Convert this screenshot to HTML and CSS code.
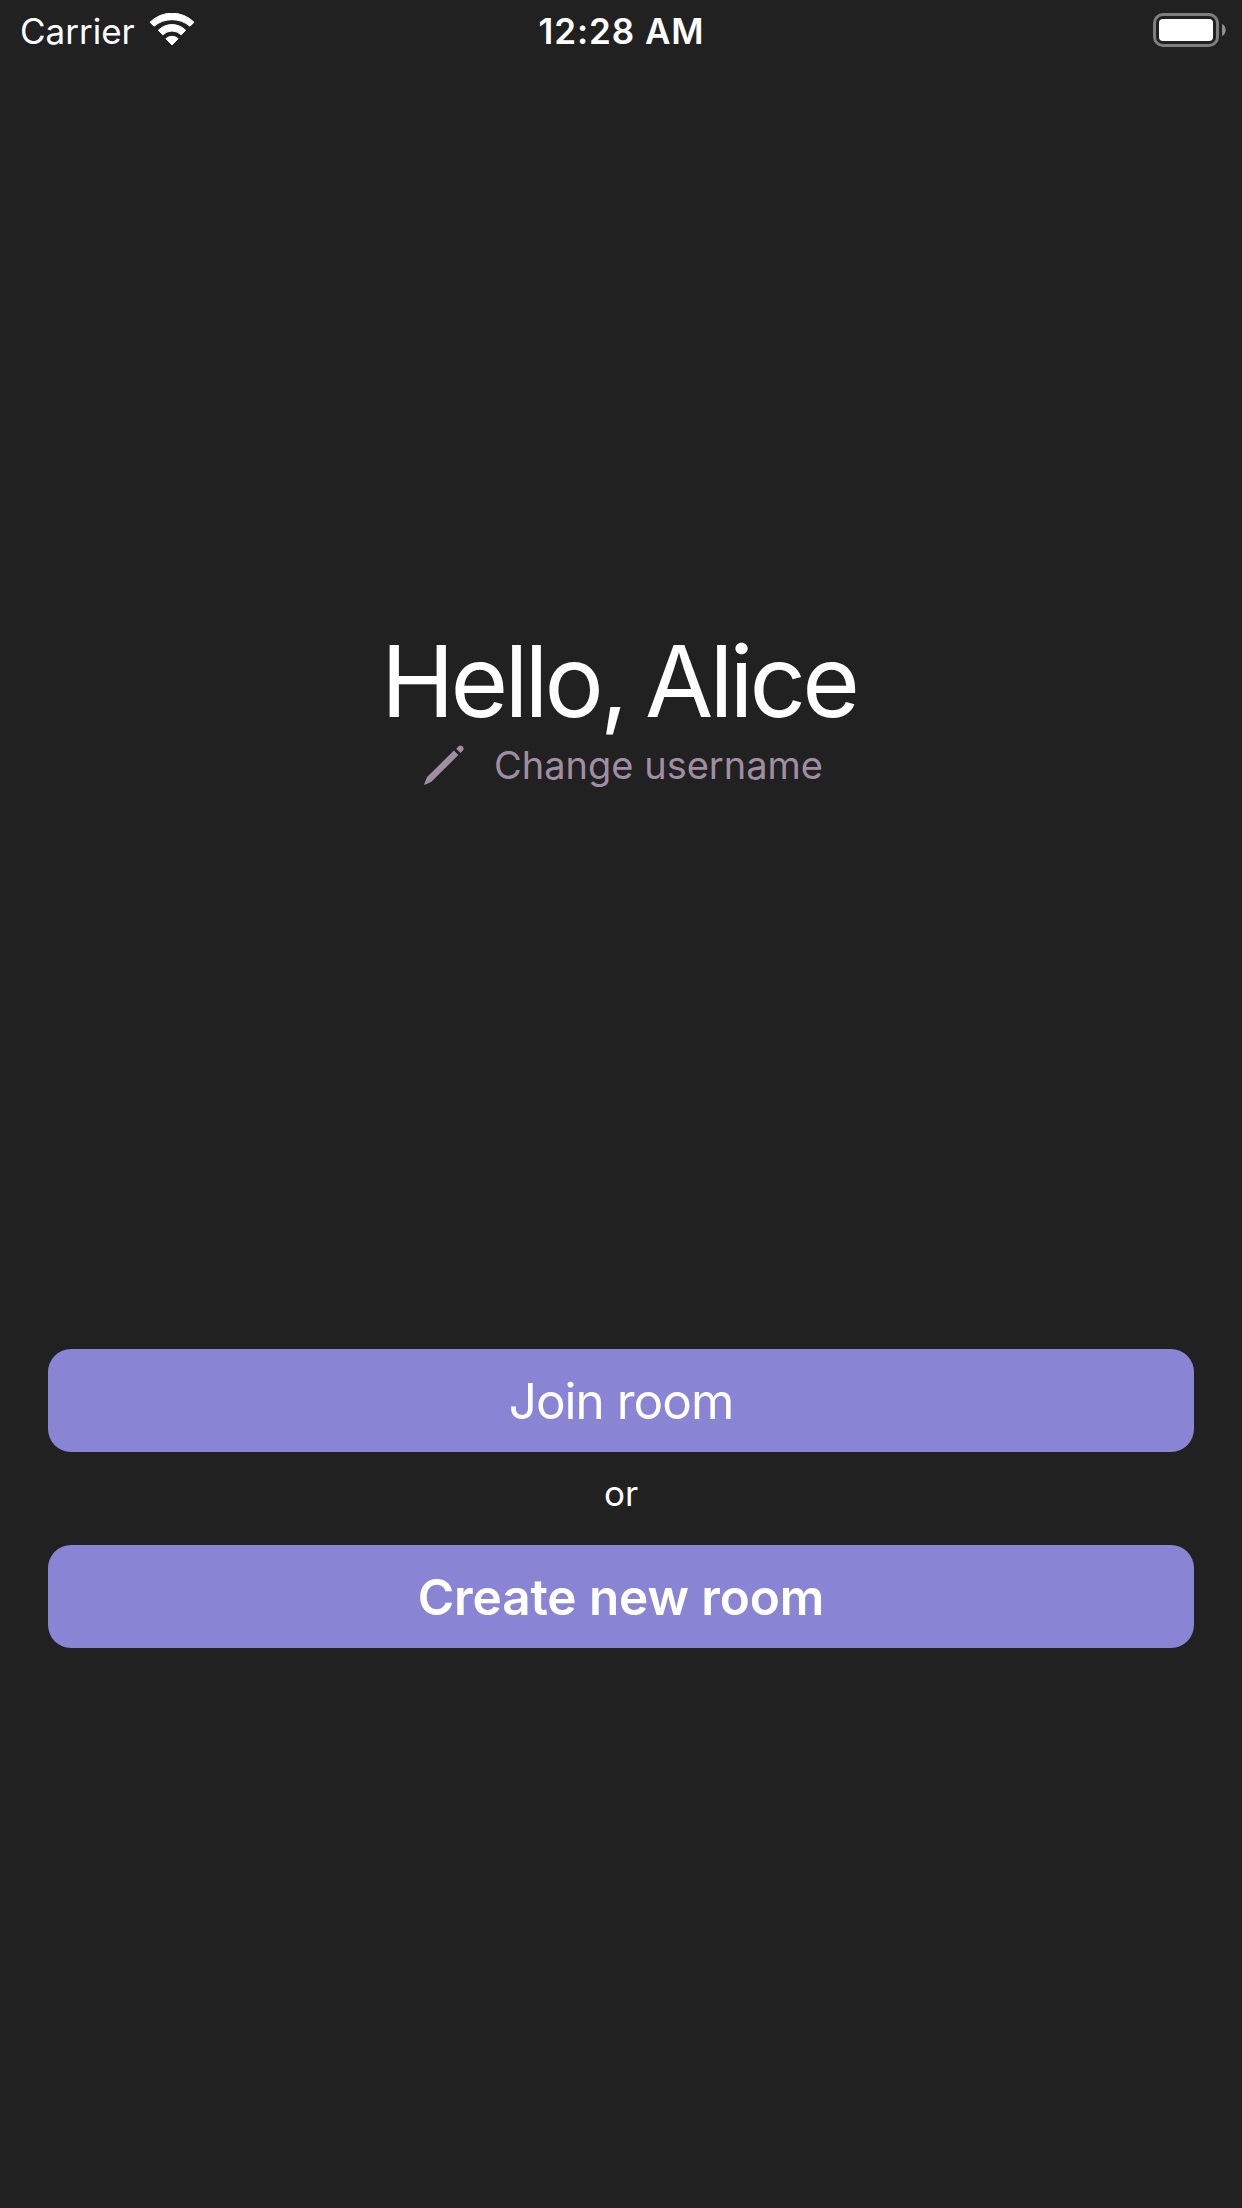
FILE: index.html
```html
<!DOCTYPE html>
<html lang="en">
<head>
<meta charset="utf-8">
<title>Rooms</title>
<link rel="stylesheet" href="styles.css">
</head>
<body>
<header class="status-bar">
  <div class="network">
    <span class="carrier">Carrier</span>
    <svg class="wifi" width="46" height="34" viewBox="0 0 46 34" aria-hidden="true">
      <path d="M1 9.2A31.4 31.4 0 0 1 45 9.2L41 13.2A28 28 0 0 0 5 13.2Z"/>
      <path d="M9.3 17.3A19.3 19.3 0 0 1 36.7 17.3L32.2 21.8A13 13 0 0 0 13.8 21.8Z"/>
      <path d="M16.9 25.7A9 9 0 0 1 29.1 25.7L23 32Z"/>
    </svg>
  </div>
  <span class="clock">12:28 AM</span>
  <svg class="battery" width="73" height="34" viewBox="0 0 73 34" aria-hidden="true">
    <rect class="shell" x="1.5" y="1.5" width="63" height="31" rx="8.5"/>
    <rect class="charge" x="6" y="6" width="54" height="22" rx="4"/>
    <path class="tip" d="M69 11C74 13 74 21 69 23Z"/>
  </svg>
</header>
<main class="screen">
  <section class="greeting">
    <h1 class="hello">Hello, Alice</h1>
    <button class="rename" type="button">
      <svg class="pencil" width="40" height="40" viewBox="0 0 40 40" aria-hidden="true">
        <path d="M0.1 39.6L2.6 33Q3 32 3.8 31.2L29.9 5.6L34.4 10L8.2 36Q7.4 36.8 6.4 37.2L1 39.8Q0.3 40 0.1 39.6Z"/>
        <path d="M32.2 3.8L34.4 1.4Q36.3-0.4 38.3 1.2L39 2Q40.4 3.8 38.9 5.4L36.4 7.9Z"/>
      </svg>
      <span class="rename-label">Change username</span>
    </button>
  </section>
  <section class="actions">
    <button class="action join" type="button">Join room</button>
    <p class="or">or</p>
    <button class="action create" type="button">Create new room</button>
  </section>
</main>
</body>
</html>
```
FILE: styles.css
```css
* {
  box-sizing: border-box;
}

body {
  margin: 0;
  min-height: 2208px;
  display: flex;
  flex-direction: column;
  background: #212121;
  color: #fff;
  font-family: Inter, "Liberation Sans", sans-serif;
}

button {
  border: 0;
  margin: 0;
  padding: 0;
  background: none;
  color: inherit;
  font: inherit;
}

/* Status bar */
.status-bar {
  height: 60px;
  padding: 0 16px 0 20px;
  display: grid;
  grid-template-columns: 1fr auto 1fr;
  align-items: start;
  font-size: 35px;
  line-height: 62px;
}

.network {
  display: flex;
  gap: 14px;
}

.wifi {
  margin-top: 13px;
  fill: #fff;
  stroke: #fff;
  stroke-width: 1;
  stroke-linejoin: round;
}

.clock {
  margin-right: 3px;
  font-weight: 600;
  letter-spacing: 0.95px;
}

.battery {
  justify-self: end;
  margin-top: 13px;
}

.shell {
  fill: none;
  stroke: #7f7f7f;
  stroke-width: 3;
}

.charge {
  fill: #fff;
}

.tip {
  fill: #8f8f8f;
}

/* Home screen */
.screen {
  display: flex;
  flex-direction: column;
  padding: 0 48px;
}

.greeting {
  margin-top: 560px;
  display: flex;
  flex-direction: column;
  align-items: center;
}

.hello {
  margin: 0 5px 0 0;
  font-size: 99px;
  font-weight: 400;
  line-height: 122px;
  letter-spacing: -3.9px;
  word-spacing: -3.6px;
}

.rename {
  display: flex;
  align-items: center;
  gap: 30px;
  height: 48px;
  margin: -1px 0 0 5px;
  color: #a08ea2;
  font-size: 38px;
  line-height: 46px;
}

.pencil {
  fill: currentColor;
}

.actions {
  margin-top: 560px;
  display: flex;
  flex-direction: column;
}

.action {
  height: 103px;
  padding-top: 2px;
  border-radius: 23px;
  background: #8a84d4;
  font-size: 49.5px;
  line-height: 101px;
}

.join {
  letter-spacing: -1px;
}

.create {
  font-weight: 600;
  letter-spacing: -0.1px;
}

.or {
  margin: 0;
  height: 93px;
  text-align: center;
  font-size: 35px;
  line-height: 82px;
}
```
